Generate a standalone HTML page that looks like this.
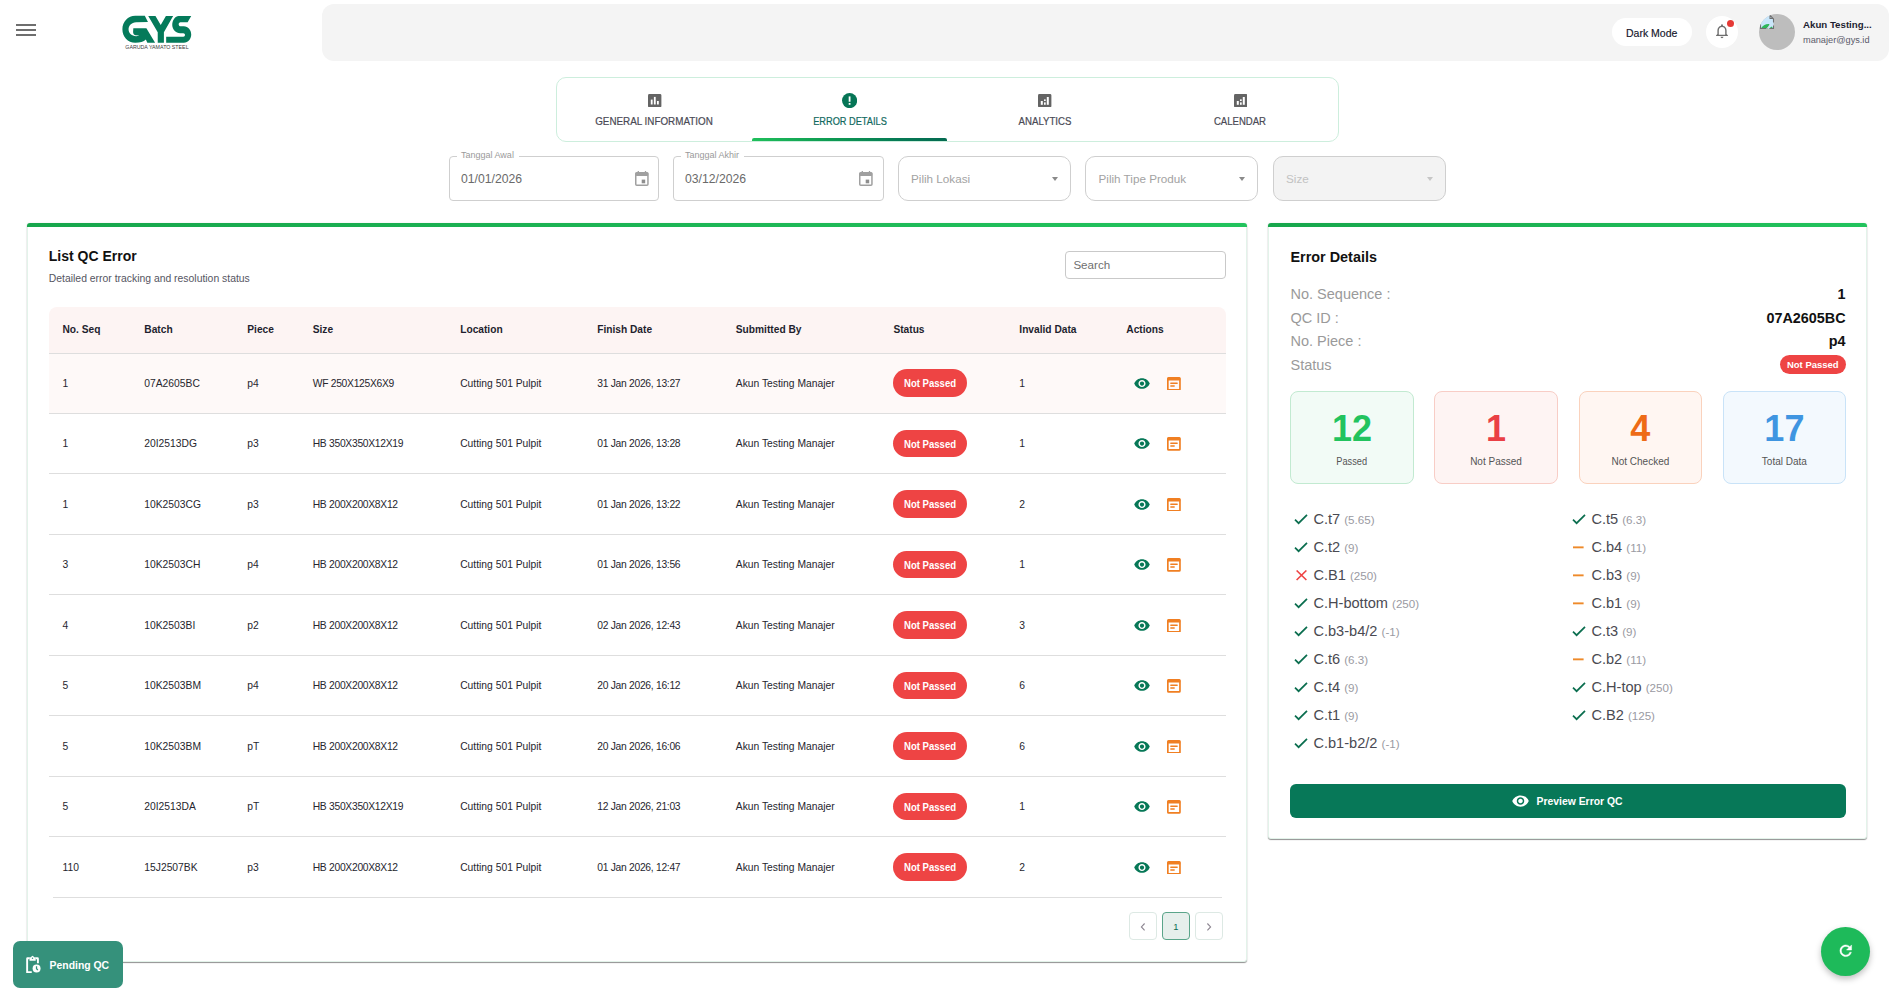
<!DOCTYPE html>
<html><head><meta charset="utf-8"><title>QC Error Details</title>
<style>
*{box-sizing:border-box;margin:0;padding:0}
html,body{width:1896px;height:1000px;overflow:hidden;background:#fff;font-family:"Liberation Sans",sans-serif;color:#222}
.abs{position:absolute}
.t{position:absolute;white-space:nowrap;line-height:1}
.hd{position:absolute;white-space:nowrap;font-size:10.2px;font-weight:700;color:#1f1f2e;line-height:12px}
.td{position:absolute;white-space:nowrap;font-size:10.3px;color:#26262e;line-height:12px}
.badge{position:absolute;width:74px;height:27.5px;border-radius:14px;background:#ee4444;color:#fff;font-weight:700;font-size:10.3px;text-align:center;line-height:27.5px}
.badge span{display:inline-block;transform:scaleX(.93);position:relative;top:1px}
.fld{position:absolute;top:156px;height:45px;border:1px solid #cfcfcf;background:#fff}
.ph{position:absolute;font-size:11.7px;color:#a3a3a3;white-space:nowrap;line-height:14px;top:15px}
.tri{position:absolute;top:20px;width:0;height:0;border-left:3.5px solid transparent;border-right:3.5px solid transparent;border-top:4px solid #8a8a8a}
.lbl{position:absolute;font-size:9px;color:#9a9a9a;background:#fff;padding:0 5px 0 4px;top:-7.4px;line-height:11px;white-space:nowrap}
.val{position:absolute;top:15px;left:11px;font-size:12.2px;color:#6a6a6a;line-height:14px}
.stat{position:absolute;top:391px;width:122.8px;height:92.5px;border-radius:8px;border:1px solid}
.stat .n{position:absolute;left:0;right:0;top:17px;text-align:center;font-size:36px;font-weight:700;line-height:40px}
.stat .l{position:absolute;left:0;right:0;top:64px;text-align:center;font-size:10px;color:#555;line-height:12px}
.cr{position:absolute;white-space:nowrap;font-size:14.6px;color:#4a4a52;line-height:18px}
.cr small{font-size:11.6px;color:#9a9aa2;position:relative;top:-0.5px}
.cr i{position:absolute;left:0;top:4px}
.ic{position:absolute}
</style></head><body>

<div class="abs" style="left:16px;top:23.7px;width:20px;height:2px;background:#6e6e6e"></div>
<div class="abs" style="left:16px;top:28.9px;width:20px;height:2px;background:#6e6e6e"></div>
<div class="abs" style="left:16px;top:34.1px;width:20px;height:2px;background:#6e6e6e"></div>
<svg class="abs" style="left:110px;top:5px" width="100" height="50" viewBox="0 0 1896 948">
<g fill="#047a5a">
<path d="M480 205 L660 205 L720 322 L495 325 C405 328 352 392 352 462 C352 540 415 592 495 592 C530 592 562 578 562 578 L480 572 C450 565 438 540 438 505 L442 440 L690 440 L855 715 L708 715 L680 655 C640 695 565 718 480 718 C335 718 235 600 235 460 C235 318 340 205 480 205 Z"/>
<path d="M725 210 L862 210 L962 380 L1060 210 L1197 210 L1022 515 L1022 715 L905 715 L905 515 Z"/>
<path d="M1300 210 L1540 210 L1472 325 L1335 325 C1315 325 1302 345 1302 365 C1302 385 1318 405 1340 405 L1400 405 C1482 405 1540 480 1540 560 C1540 640 1482 715 1400 715 L1065 715 L1065 600 L1390 600 C1410 600 1422 587 1422 570 C1422 552 1408 537 1390 537 L1330 537 C1248 537 1180 462 1180 380 C1180 290 1240 210 1300 210 Z"/>
</g>
<text x="290" y="830" font-family="Liberation Sans" font-size="112" font-weight="400" fill="#3a3a3a" textLength="1200" lengthAdjust="spacingAndGlyphs">GARUDA YAMATO STEEL</text>
</svg>
<div class="abs" style="left:322px;top:4px;width:1567px;height:57px;background:#f4f4f4;border-radius:12px"></div>
<div class="abs" style="left:1612px;top:18px;width:80px;height:28px;background:#fff;border-radius:14px"></div>
<div class="t" style="left:1626px;top:27.8px;font-size:10.5px;color:#15152a;-webkit-text-stroke:0.15px #15152a">Dark Mode</div>
<div class="abs" style="left:1706px;top:16px;width:32px;height:32px;background:#fff;border-radius:50%"></div>
<svg class="abs" style="left:1714px;top:23.3px" width="16" height="16.2" viewBox="0 0 16 17" preserveAspectRatio="none"><path d="M8 1.3 C8.6 1.3 8.9 1.7 8.9 2.2 L8.9 2.9 C11.2 3.4 12.6 5.4 12.6 7.8 L12.6 11.6 L14 13 L14 13.7 L2 13.7 L2 13 L3.4 11.6 L3.4 7.8 C3.4 5.4 4.8 3.4 7.1 2.9 L7.1 2.2 C7.1 1.7 7.4 1.3 8 1.3 Z M4.8 12.3 L11.2 12.3 L11.2 7.8 C11.2 5.9 9.9 4.3 8 4.3 C6.1 4.3 4.8 5.9 4.8 7.8 Z M6.6 14.5 L9.4 14.5 C9.4 15.3 8.8 15.9 8 15.9 C7.2 15.9 6.6 15.3 6.6 14.5 Z" fill="#6e6e6e"/></svg>
<div class="abs" style="left:1727.3px;top:19.6px;width:7px;height:7px;background:#e53935;border-radius:50%"></div>
<div class="abs" style="left:1759px;top:14px;width:36px;height:36px;background:#bdbdbd;border-radius:50%"></div>
<svg class="abs" style="left:1759px;top:14px" width="36" height="36" viewBox="0 0 36 36"><defs><clipPath id="av"><circle cx="18" cy="18" r="18"/></clipPath></defs><g clip-path="url(#av)"><path d="M1.5 14.5 L1.5 4 L10.5 1 L14.5 5 L14.5 14.5 Z" fill="#c9e6fa"/><path d="M1.8 14.5 C3.5 11.5 7 9.5 10.5 10 L8.5 14.5 Z" fill="#2db65a"/><path d="M10.2 14.5 L12.5 12.5 L14.3 14.5 Z" fill="#2db65a"/><path d="M1.5 9.5 L1.5 14.5 L7.5 14.5 M10.5 14.5 L14.5 14.5 L14.5 11.5 M14.5 8.5 L14.5 5 L11 1.3 L11 4.5 L14.5 4.5" fill="none" stroke="#6f6f6f" stroke-width="1.1"/><path d="M7.5 14.5 L10.5 11.5" stroke="#d9c4d9" stroke-width="0.8"/></g></svg>
<div class="t" style="left:1803px;top:19.5px;font-size:9.7px;font-weight:700;color:#1e1e30">Akun Testing...</div>
<div class="t" style="left:1803px;top:36px;font-size:9.2px;color:#5a5a6a">manajer@gys.id</div>
<div class="abs" style="left:556px;top:77px;width:783px;height:64.5px;border:1px solid #cdeedd;border-radius:10px"></div>
<div class="t" style="left:554.45px;width:200px;text-align:center;top:115.73px;font-size:10.6px;color:#4a4a55;-webkit-text-stroke:0.2px #4a4a55;transform:scaleX(0.9289)">GENERAL INFORMATION</div>
<div class="t" style="left:749.9px;width:200px;text-align:center;top:115.73px;font-size:10.6px;color:#11695e;-webkit-text-stroke:0.2px #11695e;transform:scaleX(0.8712)">ERROR DETAILS</div>
<div class="t" style="left:945.2px;width:200px;text-align:center;top:115.73px;font-size:10.6px;color:#4a4a55;-webkit-text-stroke:0.2px #4a4a55;transform:scaleX(0.9105)">ANALYTICS</div>
<div class="t" style="left:1140.4px;width:200px;text-align:center;top:115.73px;font-size:10.6px;color:#4a4a55;-webkit-text-stroke:0.2px #4a4a55;transform:scaleX(0.9029)">CALENDAR</div>
<svg class="abs" style="left:648.25px;top:94px" width="13.4" height="13.4" viewBox="0 0 13.4 13.4"><rect x="0" y="0" width="13.4" height="13.4" rx="1.4" fill="#646464"/><rect x="2.8" y="5.6" width="1.8" height="4.9" fill="#fff"/><rect x="5.9" y="2.9" width="1.8" height="7.6" fill="#fff"/><rect x="9" y="7" width="1.8" height="3.5" fill="#fff"/></svg>
<svg class="abs" style="left:1038.2px;top:94px" width="13.4" height="13.4" viewBox="0 0 13.4 13.4"><rect x="0" y="0" width="13.4" height="13.4" rx="1.4" fill="#646464"/><rect x="2.8" y="7" width="2" height="3.8" fill="#fff"/><rect x="6" y="5.4" width="1.7" height="1.6" fill="#fff"/><rect x="6" y="8.4" width="1.7" height="2.4" fill="#fff"/><rect x="8.8" y="3" width="2" height="7.8" fill="#fff"/></svg>
<svg class="abs" style="left:1233.6px;top:94px" width="13.4" height="13.4" viewBox="0 0 13.4 13.4"><rect x="0" y="0" width="13.4" height="13.4" rx="1.4" fill="#646464"/><rect x="2.8" y="7" width="2" height="3.8" fill="#fff"/><rect x="6" y="5.4" width="1.7" height="1.6" fill="#fff"/><rect x="6" y="8.4" width="1.7" height="2.4" fill="#fff"/><rect x="8.8" y="3" width="2" height="7.8" fill="#fff"/></svg>
<svg class="abs" style="left:842px;top:93.2px" width="15.2" height="15.2" viewBox="0 0 16 16"><circle cx="8" cy="8" r="8" fill="#067556"/><rect x="7.05" y="3.6" width="1.9" height="5.6" fill="#fff"/><rect x="7.05" y="10.5" width="1.9" height="1.9" fill="#fff"/></svg>
<div class="abs" style="left:752px;top:138px;width:195px;height:3.2px;border-radius:2px 2px 0 0;background:linear-gradient(90deg,#1fbf5b 0%,#0e9a52 40%,#067a55 75%,#046a50 100%)"></div>
<div class="fld" style="left:449px;width:209.5px;border-radius:4px"><div class="lbl" style="left:7px">Tanggal Awal</div><div class="val">01/01/2026</div></div>
<svg class="abs" style="left:635.3px;top:171px" width="14" height="15" viewBox="0 0 14 15"><path d="M3.3 0 L3.3 2.5 M10.5 0 L10.5 2.5" stroke="#a0a0a0" stroke-width="1.3"/><rect x="0.75" y="1.75" width="12.2" height="12.4" rx="1" fill="none" stroke="#a0a0a0" stroke-width="1.5"/><rect x="0.5" y="1.5" width="12.7" height="3.6" rx="1" fill="#a0a0a0"/><rect x="6.7" y="8.6" width="3.5" height="3.7" fill="#8e8e8e"/></svg>
<div class="fld" style="left:673px;width:210.5px;border-radius:4px"><div class="lbl" style="left:7px">Tanggal Akhir</div><div class="val">03/12/2026</div></div>
<svg class="abs" style="left:859.2px;top:171px" width="14" height="15" viewBox="0 0 14 15"><path d="M3.3 0 L3.3 2.5 M10.5 0 L10.5 2.5" stroke="#a0a0a0" stroke-width="1.3"/><rect x="0.75" y="1.75" width="12.2" height="12.4" rx="1" fill="none" stroke="#a0a0a0" stroke-width="1.5"/><rect x="0.5" y="1.5" width="12.7" height="3.6" rx="1" fill="#a0a0a0"/><rect x="6.7" y="8.6" width="3.5" height="3.7" fill="#8e8e8e"/></svg>
<div class="fld" style="left:898px;width:172.5px;border-radius:10px"><div class="ph" style="left:12px">Pilih Lokasi</div><div class="tri" style="left:153px"></div></div>
<div class="fld" style="left:1085px;width:173px;border-radius:10px"><div class="ph" style="left:12.5px">Pilih Tipe Produk</div><div class="tri" style="left:153px"></div></div>
<div class="fld" style="left:1273px;width:172.5px;border-radius:10px;background:#f3f3f3"><div class="ph" style="left:12px;color:#c2c2c2">Size</div><div class="tri" style="left:153px;border-top-color:#c6c6c6"></div></div>
<div class="abs" style="left:27px;top:223px;width:1220px;height:738.5px;background:#fff;border:1px solid #e3f3ea;border-top:none;border-radius:3px;box-shadow:0 1px 1px rgba(0,0,0,.42),0 0 2px rgba(0,0,0,.10)"></div>
<div class="abs" style="left:27px;top:223px;width:1220px;height:4px;background:linear-gradient(90deg,#17a64c,#22c35d);border-radius:3px 3px 0 0"></div>
<div class="t" style="left:48.8px;top:249px;font-size:14px;font-weight:700;color:#111">List QC Error</div>
<div class="t" style="left:48.8px;top:274px;font-size:10.4px;color:#55555f">Detailed error tracking and resolution status</div>
<div class="abs" style="left:1065px;top:251px;width:161px;height:28px;border:1px solid #c9c9c9;border-radius:4px"></div>
<div class="t" style="left:1073.4px;top:258.8px;font-size:11.6px;color:#6f6f6f">Search</div>
<div class="abs" style="left:49px;top:307px;width:1177px;height:46px;background:#fdf4f3;border-radius:8px 8px 0 0"></div>
<div class="abs" style="left:49px;top:353px;width:1177px;height:60.5px;background:#fef9f8"></div>
<div class="abs" style="left:49px;top:352.5px;width:1177px;height:1px;background:#dedede"></div>
<div class="hd" style="left:62.5px;top:323.5px">No. Seq</div>
<div class="hd" style="left:144.3px;top:323.5px">Batch</div>
<div class="hd" style="left:247.3px;top:323.5px">Piece</div>
<div class="hd" style="left:312.7px;top:323.5px">Size</div>
<div class="hd" style="left:460.2px;top:323.5px">Location</div>
<div class="hd" style="left:597.2px;top:323.5px">Finish Date</div>
<div class="hd" style="left:735.8px;top:323.5px">Submitted By</div>
<div class="hd" style="left:893.4px;top:323.5px">Status</div>
<div class="hd" style="left:1019.3px;top:323.5px">Invalid Data</div>
<div class="hd" style="left:1126.3px;top:323.5px">Actions</div>
<div class="abs" style="left:49px;width:1177px;top:412.5px;height:1px;background:#dedede"></div>
<div class="td" style="left:62.5px;top:377.75px">1</div>
<div class="td" style="left:144.3px;top:377.75px">07A2605BC</div>
<div class="td" style="left:247.3px;top:377.75px">p4</div>
<div class="td" style="left:312.7px;top:377.75px;letter-spacing:-0.28px">WF 250X125X6X9</div>
<div class="td" style="left:460.2px;top:377.75px">Cutting 501 Pulpit</div>
<div class="td" style="left:597.2px;top:377.75px;letter-spacing:-0.28px">31 Jan 2026, 13:27</div>
<div class="td" style="left:735.8px;top:377.75px">Akun Testing Manajer</div>
<div class="badge" style="left:892.7px;top:369.25px"><span>Not Passed</span></div>
<div class="td" style="left:1019.3px;top:377.75px">1</div>
<div class="ic" style="left:1132.5px;top:374.65px"><svg width="18" height="17" viewBox="0 0 24 24"><path fill="#077857" d="M12 4.5C7 4.5 2.73 7.61 1 12c1.73 4.39 6 7.5 11 7.5s9.27-3.11 11-7.5c-1.73-4.39-6-7.5-11-7.5zM12 17c-2.76 0-5-2.24-5-5s2.24-5 5-5 5 2.24 5 5-2.24 5-5 5zm0-8c-1.66 0-3 1.34-3 3s1.34 3 3 3 3-1.34 3-3-1.34-3-3-3z"/></svg></div>
<div class="ic" style="left:1167px;top:376.45px"><svg width="13.8" height="13.8" viewBox="0 0 14 14"><rect x="0.85" y="0.85" width="12.3" height="12.3" rx="0.8" fill="none" stroke="#f07f22" stroke-width="1.7"/><rect x="0.5" y="0.5" width="13" height="3" rx="0.6" fill="#f07f22"/><rect x="3.2" y="5.5" width="7.8" height="1.5" rx="0.7" fill="#f07f22"/><rect x="3.2" y="8.4" width="4.8" height="1.5" rx="0.7" fill="#f07f22"/></svg></div>
<div class="abs" style="left:49px;width:1177px;top:473.0px;height:1px;background:#dedede"></div>
<div class="td" style="left:62.5px;top:438.25px">1</div>
<div class="td" style="left:144.3px;top:438.25px">20I2513DG</div>
<div class="td" style="left:247.3px;top:438.25px">p3</div>
<div class="td" style="left:312.7px;top:438.25px;letter-spacing:-0.28px">HB 350X350X12X19</div>
<div class="td" style="left:460.2px;top:438.25px">Cutting 501 Pulpit</div>
<div class="td" style="left:597.2px;top:438.25px;letter-spacing:-0.28px">01 Jan 2026, 13:28</div>
<div class="td" style="left:735.8px;top:438.25px">Akun Testing Manajer</div>
<div class="badge" style="left:892.7px;top:429.75px"><span>Not Passed</span></div>
<div class="td" style="left:1019.3px;top:438.25px">1</div>
<div class="ic" style="left:1132.5px;top:435.15px"><svg width="18" height="17" viewBox="0 0 24 24"><path fill="#077857" d="M12 4.5C7 4.5 2.73 7.61 1 12c1.73 4.39 6 7.5 11 7.5s9.27-3.11 11-7.5c-1.73-4.39-6-7.5-11-7.5zM12 17c-2.76 0-5-2.24-5-5s2.24-5 5-5 5 2.24 5 5-2.24 5-5 5zm0-8c-1.66 0-3 1.34-3 3s1.34 3 3 3 3-1.34 3-3-1.34-3-3-3z"/></svg></div>
<div class="ic" style="left:1167px;top:436.95px"><svg width="13.8" height="13.8" viewBox="0 0 14 14"><rect x="0.85" y="0.85" width="12.3" height="12.3" rx="0.8" fill="none" stroke="#f07f22" stroke-width="1.7"/><rect x="0.5" y="0.5" width="13" height="3" rx="0.6" fill="#f07f22"/><rect x="3.2" y="5.5" width="7.8" height="1.5" rx="0.7" fill="#f07f22"/><rect x="3.2" y="8.4" width="4.8" height="1.5" rx="0.7" fill="#f07f22"/></svg></div>
<div class="abs" style="left:49px;width:1177px;top:533.5px;height:1px;background:#dedede"></div>
<div class="td" style="left:62.5px;top:498.75px">1</div>
<div class="td" style="left:144.3px;top:498.75px">10K2503CG</div>
<div class="td" style="left:247.3px;top:498.75px">p3</div>
<div class="td" style="left:312.7px;top:498.75px;letter-spacing:-0.28px">HB 200X200X8X12</div>
<div class="td" style="left:460.2px;top:498.75px">Cutting 501 Pulpit</div>
<div class="td" style="left:597.2px;top:498.75px;letter-spacing:-0.28px">01 Jan 2026, 13:22</div>
<div class="td" style="left:735.8px;top:498.75px">Akun Testing Manajer</div>
<div class="badge" style="left:892.7px;top:490.25px"><span>Not Passed</span></div>
<div class="td" style="left:1019.3px;top:498.75px">2</div>
<div class="ic" style="left:1132.5px;top:495.65px"><svg width="18" height="17" viewBox="0 0 24 24"><path fill="#077857" d="M12 4.5C7 4.5 2.73 7.61 1 12c1.73 4.39 6 7.5 11 7.5s9.27-3.11 11-7.5c-1.73-4.39-6-7.5-11-7.5zM12 17c-2.76 0-5-2.24-5-5s2.24-5 5-5 5 2.24 5 5-2.24 5-5 5zm0-8c-1.66 0-3 1.34-3 3s1.34 3 3 3 3-1.34 3-3-1.34-3-3-3z"/></svg></div>
<div class="ic" style="left:1167px;top:497.45px"><svg width="13.8" height="13.8" viewBox="0 0 14 14"><rect x="0.85" y="0.85" width="12.3" height="12.3" rx="0.8" fill="none" stroke="#f07f22" stroke-width="1.7"/><rect x="0.5" y="0.5" width="13" height="3" rx="0.6" fill="#f07f22"/><rect x="3.2" y="5.5" width="7.8" height="1.5" rx="0.7" fill="#f07f22"/><rect x="3.2" y="8.4" width="4.8" height="1.5" rx="0.7" fill="#f07f22"/></svg></div>
<div class="abs" style="left:49px;width:1177px;top:594.0px;height:1px;background:#dedede"></div>
<div class="td" style="left:62.5px;top:559.25px">3</div>
<div class="td" style="left:144.3px;top:559.25px">10K2503CH</div>
<div class="td" style="left:247.3px;top:559.25px">p4</div>
<div class="td" style="left:312.7px;top:559.25px;letter-spacing:-0.28px">HB 200X200X8X12</div>
<div class="td" style="left:460.2px;top:559.25px">Cutting 501 Pulpit</div>
<div class="td" style="left:597.2px;top:559.25px;letter-spacing:-0.28px">01 Jan 2026, 13:56</div>
<div class="td" style="left:735.8px;top:559.25px">Akun Testing Manajer</div>
<div class="badge" style="left:892.7px;top:550.75px"><span>Not Passed</span></div>
<div class="td" style="left:1019.3px;top:559.25px">1</div>
<div class="ic" style="left:1132.5px;top:556.15px"><svg width="18" height="17" viewBox="0 0 24 24"><path fill="#077857" d="M12 4.5C7 4.5 2.73 7.61 1 12c1.73 4.39 6 7.5 11 7.5s9.27-3.11 11-7.5c-1.73-4.39-6-7.5-11-7.5zM12 17c-2.76 0-5-2.24-5-5s2.24-5 5-5 5 2.24 5 5-2.24 5-5 5zm0-8c-1.66 0-3 1.34-3 3s1.34 3 3 3 3-1.34 3-3-1.34-3-3-3z"/></svg></div>
<div class="ic" style="left:1167px;top:557.95px"><svg width="13.8" height="13.8" viewBox="0 0 14 14"><rect x="0.85" y="0.85" width="12.3" height="12.3" rx="0.8" fill="none" stroke="#f07f22" stroke-width="1.7"/><rect x="0.5" y="0.5" width="13" height="3" rx="0.6" fill="#f07f22"/><rect x="3.2" y="5.5" width="7.8" height="1.5" rx="0.7" fill="#f07f22"/><rect x="3.2" y="8.4" width="4.8" height="1.5" rx="0.7" fill="#f07f22"/></svg></div>
<div class="abs" style="left:49px;width:1177px;top:654.5px;height:1px;background:#dedede"></div>
<div class="td" style="left:62.5px;top:619.75px">4</div>
<div class="td" style="left:144.3px;top:619.75px">10K2503BI</div>
<div class="td" style="left:247.3px;top:619.75px">p2</div>
<div class="td" style="left:312.7px;top:619.75px;letter-spacing:-0.28px">HB 200X200X8X12</div>
<div class="td" style="left:460.2px;top:619.75px">Cutting 501 Pulpit</div>
<div class="td" style="left:597.2px;top:619.75px;letter-spacing:-0.28px">02 Jan 2026, 12:43</div>
<div class="td" style="left:735.8px;top:619.75px">Akun Testing Manajer</div>
<div class="badge" style="left:892.7px;top:611.25px"><span>Not Passed</span></div>
<div class="td" style="left:1019.3px;top:619.75px">3</div>
<div class="ic" style="left:1132.5px;top:616.65px"><svg width="18" height="17" viewBox="0 0 24 24"><path fill="#077857" d="M12 4.5C7 4.5 2.73 7.61 1 12c1.73 4.39 6 7.5 11 7.5s9.27-3.11 11-7.5c-1.73-4.39-6-7.5-11-7.5zM12 17c-2.76 0-5-2.24-5-5s2.24-5 5-5 5 2.24 5 5-2.24 5-5 5zm0-8c-1.66 0-3 1.34-3 3s1.34 3 3 3 3-1.34 3-3-1.34-3-3-3z"/></svg></div>
<div class="ic" style="left:1167px;top:618.45px"><svg width="13.8" height="13.8" viewBox="0 0 14 14"><rect x="0.85" y="0.85" width="12.3" height="12.3" rx="0.8" fill="none" stroke="#f07f22" stroke-width="1.7"/><rect x="0.5" y="0.5" width="13" height="3" rx="0.6" fill="#f07f22"/><rect x="3.2" y="5.5" width="7.8" height="1.5" rx="0.7" fill="#f07f22"/><rect x="3.2" y="8.4" width="4.8" height="1.5" rx="0.7" fill="#f07f22"/></svg></div>
<div class="abs" style="left:49px;width:1177px;top:715.0px;height:1px;background:#dedede"></div>
<div class="td" style="left:62.5px;top:680.25px">5</div>
<div class="td" style="left:144.3px;top:680.25px">10K2503BM</div>
<div class="td" style="left:247.3px;top:680.25px">p4</div>
<div class="td" style="left:312.7px;top:680.25px;letter-spacing:-0.28px">HB 200X200X8X12</div>
<div class="td" style="left:460.2px;top:680.25px">Cutting 501 Pulpit</div>
<div class="td" style="left:597.2px;top:680.25px;letter-spacing:-0.28px">20 Jan 2026, 16:12</div>
<div class="td" style="left:735.8px;top:680.25px">Akun Testing Manajer</div>
<div class="badge" style="left:892.7px;top:671.75px"><span>Not Passed</span></div>
<div class="td" style="left:1019.3px;top:680.25px">6</div>
<div class="ic" style="left:1132.5px;top:677.15px"><svg width="18" height="17" viewBox="0 0 24 24"><path fill="#077857" d="M12 4.5C7 4.5 2.73 7.61 1 12c1.73 4.39 6 7.5 11 7.5s9.27-3.11 11-7.5c-1.73-4.39-6-7.5-11-7.5zM12 17c-2.76 0-5-2.24-5-5s2.24-5 5-5 5 2.24 5 5-2.24 5-5 5zm0-8c-1.66 0-3 1.34-3 3s1.34 3 3 3 3-1.34 3-3-1.34-3-3-3z"/></svg></div>
<div class="ic" style="left:1167px;top:678.95px"><svg width="13.8" height="13.8" viewBox="0 0 14 14"><rect x="0.85" y="0.85" width="12.3" height="12.3" rx="0.8" fill="none" stroke="#f07f22" stroke-width="1.7"/><rect x="0.5" y="0.5" width="13" height="3" rx="0.6" fill="#f07f22"/><rect x="3.2" y="5.5" width="7.8" height="1.5" rx="0.7" fill="#f07f22"/><rect x="3.2" y="8.4" width="4.8" height="1.5" rx="0.7" fill="#f07f22"/></svg></div>
<div class="abs" style="left:49px;width:1177px;top:775.5px;height:1px;background:#dedede"></div>
<div class="td" style="left:62.5px;top:740.75px">5</div>
<div class="td" style="left:144.3px;top:740.75px">10K2503BM</div>
<div class="td" style="left:247.3px;top:740.75px">pT</div>
<div class="td" style="left:312.7px;top:740.75px;letter-spacing:-0.28px">HB 200X200X8X12</div>
<div class="td" style="left:460.2px;top:740.75px">Cutting 501 Pulpit</div>
<div class="td" style="left:597.2px;top:740.75px;letter-spacing:-0.28px">20 Jan 2026, 16:06</div>
<div class="td" style="left:735.8px;top:740.75px">Akun Testing Manajer</div>
<div class="badge" style="left:892.7px;top:732.25px"><span>Not Passed</span></div>
<div class="td" style="left:1019.3px;top:740.75px">6</div>
<div class="ic" style="left:1132.5px;top:737.65px"><svg width="18" height="17" viewBox="0 0 24 24"><path fill="#077857" d="M12 4.5C7 4.5 2.73 7.61 1 12c1.73 4.39 6 7.5 11 7.5s9.27-3.11 11-7.5c-1.73-4.39-6-7.5-11-7.5zM12 17c-2.76 0-5-2.24-5-5s2.24-5 5-5 5 2.24 5 5-2.24 5-5 5zm0-8c-1.66 0-3 1.34-3 3s1.34 3 3 3 3-1.34 3-3-1.34-3-3-3z"/></svg></div>
<div class="ic" style="left:1167px;top:739.45px"><svg width="13.8" height="13.8" viewBox="0 0 14 14"><rect x="0.85" y="0.85" width="12.3" height="12.3" rx="0.8" fill="none" stroke="#f07f22" stroke-width="1.7"/><rect x="0.5" y="0.5" width="13" height="3" rx="0.6" fill="#f07f22"/><rect x="3.2" y="5.5" width="7.8" height="1.5" rx="0.7" fill="#f07f22"/><rect x="3.2" y="8.4" width="4.8" height="1.5" rx="0.7" fill="#f07f22"/></svg></div>
<div class="abs" style="left:49px;width:1177px;top:836.0px;height:1px;background:#dedede"></div>
<div class="td" style="left:62.5px;top:801.25px">5</div>
<div class="td" style="left:144.3px;top:801.25px">20I2513DA</div>
<div class="td" style="left:247.3px;top:801.25px">pT</div>
<div class="td" style="left:312.7px;top:801.25px;letter-spacing:-0.28px">HB 350X350X12X19</div>
<div class="td" style="left:460.2px;top:801.25px">Cutting 501 Pulpit</div>
<div class="td" style="left:597.2px;top:801.25px;letter-spacing:-0.28px">12 Jan 2026, 21:03</div>
<div class="td" style="left:735.8px;top:801.25px">Akun Testing Manajer</div>
<div class="badge" style="left:892.7px;top:792.75px"><span>Not Passed</span></div>
<div class="td" style="left:1019.3px;top:801.25px">1</div>
<div class="ic" style="left:1132.5px;top:798.15px"><svg width="18" height="17" viewBox="0 0 24 24"><path fill="#077857" d="M12 4.5C7 4.5 2.73 7.61 1 12c1.73 4.39 6 7.5 11 7.5s9.27-3.11 11-7.5c-1.73-4.39-6-7.5-11-7.5zM12 17c-2.76 0-5-2.24-5-5s2.24-5 5-5 5 2.24 5 5-2.24 5-5 5zm0-8c-1.66 0-3 1.34-3 3s1.34 3 3 3 3-1.34 3-3-1.34-3-3-3z"/></svg></div>
<div class="ic" style="left:1167px;top:799.95px"><svg width="13.8" height="13.8" viewBox="0 0 14 14"><rect x="0.85" y="0.85" width="12.3" height="12.3" rx="0.8" fill="none" stroke="#f07f22" stroke-width="1.7"/><rect x="0.5" y="0.5" width="13" height="3" rx="0.6" fill="#f07f22"/><rect x="3.2" y="5.5" width="7.8" height="1.5" rx="0.7" fill="#f07f22"/><rect x="3.2" y="8.4" width="4.8" height="1.5" rx="0.7" fill="#f07f22"/></svg></div>
<div class="abs" style="left:53px;width:1169px;top:896.5px;height:1px;background:#dedede"></div>
<div class="td" style="left:62.5px;top:861.75px">110</div>
<div class="td" style="left:144.3px;top:861.75px">15J2507BK</div>
<div class="td" style="left:247.3px;top:861.75px">p3</div>
<div class="td" style="left:312.7px;top:861.75px;letter-spacing:-0.28px">HB 200X200X8X12</div>
<div class="td" style="left:460.2px;top:861.75px">Cutting 501 Pulpit</div>
<div class="td" style="left:597.2px;top:861.75px;letter-spacing:-0.28px">01 Jan 2026, 12:47</div>
<div class="td" style="left:735.8px;top:861.75px">Akun Testing Manajer</div>
<div class="badge" style="left:892.7px;top:853.25px"><span>Not Passed</span></div>
<div class="td" style="left:1019.3px;top:861.75px">2</div>
<div class="ic" style="left:1132.5px;top:858.65px"><svg width="18" height="17" viewBox="0 0 24 24"><path fill="#077857" d="M12 4.5C7 4.5 2.73 7.61 1 12c1.73 4.39 6 7.5 11 7.5s9.27-3.11 11-7.5c-1.73-4.39-6-7.5-11-7.5zM12 17c-2.76 0-5-2.24-5-5s2.24-5 5-5 5 2.24 5 5-2.24 5-5 5zm0-8c-1.66 0-3 1.34-3 3s1.34 3 3 3 3-1.34 3-3-1.34-3-3-3z"/></svg></div>
<div class="ic" style="left:1167px;top:860.45px"><svg width="13.8" height="13.8" viewBox="0 0 14 14"><rect x="0.85" y="0.85" width="12.3" height="12.3" rx="0.8" fill="none" stroke="#f07f22" stroke-width="1.7"/><rect x="0.5" y="0.5" width="13" height="3" rx="0.6" fill="#f07f22"/><rect x="3.2" y="5.5" width="7.8" height="1.5" rx="0.7" fill="#f07f22"/><rect x="3.2" y="8.4" width="4.8" height="1.5" rx="0.7" fill="#f07f22"/></svg></div>
<div class="abs" style="left:53px;top:352.5px;width:0;height:0"></div>
<div class="abs" style="left:1129.3px;top:912.2px;width:27.5px;height:27.5px;border:1px solid #dde9e4;border-radius:4px"></div>
<div class="abs" style="left:1162.2px;top:912.2px;width:27.5px;height:27.5px;border:1.3px solid #5aa58a;border-radius:4px;background:#e6efec"></div>
<div class="t" style="left:1162.2px;width:27.5px;text-align:center;top:921.5px;font-size:9.4px;color:#0c6b54">1</div>
<div class="abs" style="left:1195.2px;top:912.2px;width:27.5px;height:27.5px;border:1px solid #dde9e4;border-radius:4px"></div>
<svg class="abs" style="left:1139px;top:921.5px" width="8" height="10" viewBox="0 0 8 10"><path d="M5.6 1.5 L2.4 4.9 L5.6 8.3" fill="none" stroke="#8c8590" stroke-width="1.1"/></svg>
<svg class="abs" style="left:1205px;top:921.5px" width="8" height="10" viewBox="0 0 8 10"><path d="M2.4 1.5 L5.6 4.9 L2.4 8.3" fill="none" stroke="#8c8590" stroke-width="1.1"/></svg>
<div class="abs" style="left:1268px;top:223px;width:599px;height:616px;background:#fff;border:1px solid #e3f3ea;border-top:none;border-radius:3px;box-shadow:0 1px 1px rgba(0,0,0,.42),0 0 2px rgba(0,0,0,.10)"></div>
<div class="abs" style="left:1268px;top:223px;width:599px;height:4px;background:linear-gradient(90deg,#17a64c,#22c35d);border-radius:3px 3px 0 0"></div>
<div class="t" style="left:1290.5px;top:249.5px;font-size:14.4px;font-weight:700;color:#111">Error Details</div>
<div class="t" style="left:1290.5px;top:286.9px;font-size:14.5px;color:#9a9a9a">No. Sequence :</div>
<div class="t" style="left:1645.6px;width:200px;text-align:right;top:286.9px;font-size:14.4px;font-weight:700;color:#111">1</div>
<div class="t" style="left:1290.5px;top:310.54999999999995px;font-size:14.5px;color:#9a9a9a">QC ID :</div>
<div class="t" style="left:1645.6px;width:200px;text-align:right;top:310.54999999999995px;font-size:14.4px;font-weight:700;color:#111">07A2605BC</div>
<div class="t" style="left:1290.5px;top:334.2px;font-size:14.5px;color:#9a9a9a">No. Piece :</div>
<div class="t" style="left:1645.6px;width:200px;text-align:right;top:334.2px;font-size:14.4px;font-weight:700;color:#111">p4</div>
<div class="t" style="left:1290.5px;top:357.84999999999997px;font-size:14.5px;color:#9a9a9a">Status</div>
<div class="abs" style="left:1780px;top:355.3px;width:65.6px;height:19px;border-radius:10px;background:#ee4444;color:#fff;font-weight:700;font-size:9.5px;text-align:center;line-height:19px;white-space:nowrap">Not Passed</div>
<div class="stat" style="left:1290.3px;width:123.4px;background:#f2fbf6;border-color:#c2ead1"><div class="n" style="color:#22c35e">12</div><div class="l" style="transform:scaleX(.92)">Passed</div></div>
<div class="stat" style="left:1434.3px;width:123.4px;background:#fef4f3;border-color:#f8cdc6"><div class="n" style="color:#ea3f45">1</div><div class="l">Not Passed</div></div>
<div class="stat" style="left:1579.2px;width:122.4px;background:#fff6f2;border-color:#fad2bd"><div class="n" style="color:#ee6b17">4</div><div class="l">Not Checked</div></div>
<div class="stat" style="left:1723.2px;width:122.4px;background:#f3f9fe;border-color:#c9e3f8"><div class="n" style="color:#3f95e1">17</div><div class="l">Total Data</div></div>
<div class="ic" style="left:1294.1px;top:510.49999999999994px"><svg width="14" height="11" viewBox="0 0 14 11"><path d="M1 5.6 L4.6 9.2 L13 0.8" fill="none" stroke="#0b6e4f" stroke-width="1.7"/></svg></div><div class="cr" style="left:1313.3999999999999px;top:510.29999999999995px">C.t7 <small>(5.65)</small></div>
<div class="ic" style="left:1294.1px;top:538.5px"><svg width="14" height="11" viewBox="0 0 14 11"><path d="M1 5.6 L4.6 9.2 L13 0.8" fill="none" stroke="#0b6e4f" stroke-width="1.7"/></svg></div><div class="cr" style="left:1313.3999999999999px;top:538.3px">C.t2 <small>(9)</small></div>
<div class="ic" style="left:1295.6px;top:566.8px"><svg width="12" height="11" viewBox="0 0 12 11"><path d="M0.6 0.5 L10.4 10 M10.4 0.5 L0.6 10" fill="none" stroke="#ef4444" stroke-width="1.6"/></svg></div><div class="cr" style="left:1313.3999999999999px;top:566.3px">C.B1 <small>(250)</small></div>
<div class="ic" style="left:1294.1px;top:594.5px"><svg width="14" height="11" viewBox="0 0 14 11"><path d="M1 5.6 L4.6 9.2 L13 0.8" fill="none" stroke="#0b6e4f" stroke-width="1.7"/></svg></div><div class="cr" style="left:1313.3999999999999px;top:594.3px">C.H-bottom <small>(250)</small></div>
<div class="ic" style="left:1294.1px;top:622.5px"><svg width="14" height="11" viewBox="0 0 14 11"><path d="M1 5.6 L4.6 9.2 L13 0.8" fill="none" stroke="#0b6e4f" stroke-width="1.7"/></svg></div><div class="cr" style="left:1313.3999999999999px;top:622.3px">C.b3-b4/2 <small>(-1)</small></div>
<div class="ic" style="left:1294.1px;top:650.5px"><svg width="14" height="11" viewBox="0 0 14 11"><path d="M1 5.6 L4.6 9.2 L13 0.8" fill="none" stroke="#0b6e4f" stroke-width="1.7"/></svg></div><div class="cr" style="left:1313.3999999999999px;top:650.3px">C.t6 <small>(6.3)</small></div>
<div class="ic" style="left:1294.1px;top:678.5px"><svg width="14" height="11" viewBox="0 0 14 11"><path d="M1 5.6 L4.6 9.2 L13 0.8" fill="none" stroke="#0b6e4f" stroke-width="1.7"/></svg></div><div class="cr" style="left:1313.3999999999999px;top:678.3px">C.t4 <small>(9)</small></div>
<div class="ic" style="left:1294.1px;top:706.5px"><svg width="14" height="11" viewBox="0 0 14 11"><path d="M1 5.6 L4.6 9.2 L13 0.8" fill="none" stroke="#0b6e4f" stroke-width="1.7"/></svg></div><div class="cr" style="left:1313.3999999999999px;top:706.3px">C.t1 <small>(9)</small></div>
<div class="ic" style="left:1294.1px;top:734.5px"><svg width="14" height="11" viewBox="0 0 14 11"><path d="M1 5.6 L4.6 9.2 L13 0.8" fill="none" stroke="#0b6e4f" stroke-width="1.7"/></svg></div><div class="cr" style="left:1313.3999999999999px;top:734.3px">C.b1-b2/2 <small>(-1)</small></div>
<div class="ic" style="left:1572.1px;top:510.49999999999994px"><svg width="14" height="11" viewBox="0 0 14 11"><path d="M1 5.6 L4.6 9.2 L13 0.8" fill="none" stroke="#0b6e4f" stroke-width="1.7"/></svg></div><div class="cr" style="left:1591.3999999999999px;top:510.29999999999995px">C.t5 <small>(6.3)</small></div>
<div class="ic" style="left:1573.3999999999999px;top:538.8px"><svg width="12" height="11" viewBox="0 0 12 11"><rect x="0" y="4.4" width="10.6" height="1.9" fill="#ee8a2a"/></svg></div><div class="cr" style="left:1591.3999999999999px;top:538.3px">C.b4 <small>(11)</small></div>
<div class="ic" style="left:1573.3999999999999px;top:566.8px"><svg width="12" height="11" viewBox="0 0 12 11"><rect x="0" y="4.4" width="10.6" height="1.9" fill="#ee8a2a"/></svg></div><div class="cr" style="left:1591.3999999999999px;top:566.3px">C.b3 <small>(9)</small></div>
<div class="ic" style="left:1573.3999999999999px;top:594.8px"><svg width="12" height="11" viewBox="0 0 12 11"><rect x="0" y="4.4" width="10.6" height="1.9" fill="#ee8a2a"/></svg></div><div class="cr" style="left:1591.3999999999999px;top:594.3px">C.b1 <small>(9)</small></div>
<div class="ic" style="left:1572.1px;top:622.5px"><svg width="14" height="11" viewBox="0 0 14 11"><path d="M1 5.6 L4.6 9.2 L13 0.8" fill="none" stroke="#0b6e4f" stroke-width="1.7"/></svg></div><div class="cr" style="left:1591.3999999999999px;top:622.3px">C.t3 <small>(9)</small></div>
<div class="ic" style="left:1573.3999999999999px;top:650.8px"><svg width="12" height="11" viewBox="0 0 12 11"><rect x="0" y="4.4" width="10.6" height="1.9" fill="#ee8a2a"/></svg></div><div class="cr" style="left:1591.3999999999999px;top:650.3px">C.b2 <small>(11)</small></div>
<div class="ic" style="left:1572.1px;top:678.5px"><svg width="14" height="11" viewBox="0 0 14 11"><path d="M1 5.6 L4.6 9.2 L13 0.8" fill="none" stroke="#0b6e4f" stroke-width="1.7"/></svg></div><div class="cr" style="left:1591.3999999999999px;top:678.3px">C.H-top <small>(250)</small></div>
<div class="ic" style="left:1572.1px;top:706.5px"><svg width="14" height="11" viewBox="0 0 14 11"><path d="M1 5.6 L4.6 9.2 L13 0.8" fill="none" stroke="#0b6e4f" stroke-width="1.7"/></svg></div><div class="cr" style="left:1591.3999999999999px;top:706.3px">C.B2 <small>(125)</small></div>
<div class="abs" style="left:1290px;top:784.2px;width:556px;height:33.5px;border-radius:6px;background:#077858"></div>
<div class="ic" style="left:1511px;top:792px"><svg width="19" height="18" viewBox="0 0 24 24"><path fill="#fff" d="M12 4.5C7 4.5 2.73 7.61 1 12c1.73 4.39 6 7.5 11 7.5s9.27-3.11 11-7.5c-1.73-4.39-6-7.5-11-7.5zM12 17c-2.76 0-5-2.24-5-5s2.24-5 5-5 5 2.24 5 5-2.24 5-5 5zm0-8c-1.66 0-3 1.34-3 3s1.34 3 3 3 3-1.34 3-3-1.34-3-3-3z"/></svg></div>
<div class="t" style="left:1536.5px;top:796.5px;font-size:10.4px;font-weight:700;color:#fff">Preview Error QC</div>
<div class="abs" style="left:13px;top:941px;width:110px;height:47px;border-radius:7px;background:#35917b"></div>
<svg class="abs" style="left:20px;top:950px" width="28" height="28" viewBox="0 0 1000 1000"><path d="M420 790 L255 790 L255 310 Q255 295 270 295 L345 295 M555 295 L625 295 Q640 295 640 310 L640 470" fill="none" stroke="#fff" stroke-width="68"/><path d="M340 385 L340 262 L395 262 Q410 205 447 205 Q485 205 500 262 L560 262 L560 385 Z" fill="#fff"/><circle cx="447" cy="292" r="26" fill="#35917b"/><circle cx="592" cy="660" r="142" fill="#fff"/><path d="M590 580 L590 670 L640 712" fill="none" stroke="#35917b" stroke-width="45"/></svg>
<div class="t" style="left:49.6px;top:961px;font-size:10.4px;font-weight:700;color:#fff">Pending QC</div>
<div class="abs" style="left:1821px;top:927px;width:49px;height:49px;border-radius:50%;background:#1eba5a;box-shadow:0 3px 6px rgba(0,0,0,.25)"></div>
<svg class="abs" style="left:1837px;top:942px" width="17.5" height="17.5" viewBox="0 0 24 24"><path fill="#fff" stroke="#fff" stroke-width="0.6" d="M17.65 6.35A7.958 7.958 0 0 0 12 4c-4.42 0-7.99 3.58-7.99 8s3.57 8 7.99 8c3.73 0 6.84-2.55 7.73-6h-2.08A5.99 5.99 0 0 1 12 18c-3.31 0-6-2.69-6-6s2.69-6 6-6c1.66 0 3.14.69 4.22 1.78L13 11h7V4l-2.35 2.35z"/></svg>
</body></html>
